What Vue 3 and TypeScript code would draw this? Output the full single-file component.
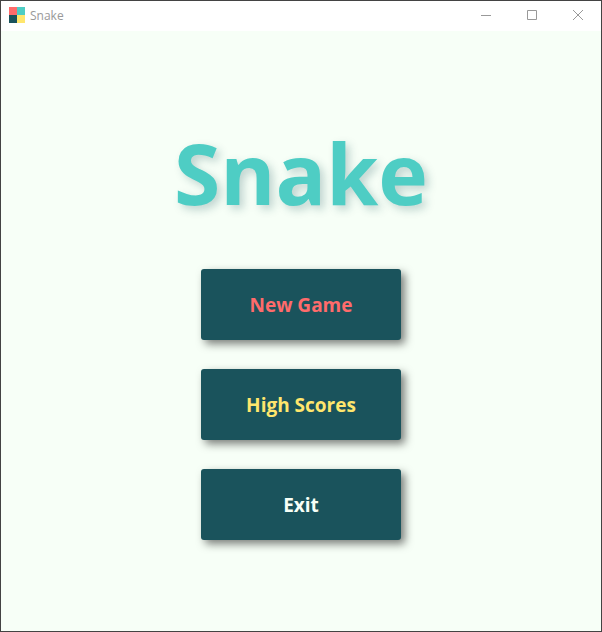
<script setup lang="ts">
interface MenuItem {
  label: string
  tone: string
}

const items: MenuItem[] = [
  { label: 'New Game', tone: 'coral' },
  { label: 'High Scores', tone: 'yellow' },
  { label: 'Exit', tone: 'light' },
]
</script>

<template>
  <div class="window">
    <header class="titlebar">
      <svg class="logo" viewBox="0 0 16 16" aria-hidden="true" shape-rendering="crispEdges">
        <rect width="8" height="8" fill="#ff6b6b" />
        <rect x="8" width="8" height="8" fill="#4ecdc4" />
        <rect y="8" width="8" height="8" fill="#1a535c" />
        <rect x="8" y="8" width="8" height="8" fill="#ffe66d" />
      </svg>
      <span class="caption">Snake</span>
      <div class="controls">
        <button type="button" aria-label="Minimize">
          <svg viewBox="0 0 10 10"><path d="M0 5.5H10" /></svg>
        </button>
        <button type="button" aria-label="Maximize">
          <svg viewBox="0 0 10 10"><path d="M.5 .5H9.5V9.5H.5Z" /></svg>
        </button>
        <button type="button" aria-label="Close">
          <svg viewBox="0 0 10 10"><path d="M0 0L10 10M10 0L0 10" /></svg>
        </button>
      </div>
    </header>
    <main class="menu">
      <h1>Snake</h1>
      <nav class="items">
        <button v-for="item in items" :key="item.label" type="button" :class="['item', item.tone]">
          {{ item.label }}
        </button>
      </nav>
    </main>
  </div>
</template>

<style>
body {
  margin: 0;
}
</style>

<style scoped>
.window {
  box-sizing: border-box;
  min-height: 100vh;
  display: flex;
  flex-direction: column;
  border: 1px solid #434343;
  background: #f7fff7;
  font-family: "Segoe UI", "Open Sans", "Noto Sans", sans-serif;
}

.titlebar {
  display: flex;
  align-items: flex-start;
  height: 30px;
  padding-left: 8px;
  background: #fff;
}

.logo {
  width: 16px;
  height: 16px;
  margin-top: 6px;
}

.caption {
  margin-top: 7px;
  margin-left: 5px;
  font-size: 12px;
  line-height: 16px;
  color: #999;
}

.controls {
  display: flex;
  height: 28px;
  margin-left: auto;
}

.controls button {
  display: flex;
  align-items: center;
  justify-content: center;
  width: 46px;
  padding: 0;
  border: 0;
  background: none;
}

.controls svg {
  width: 10px;
  height: 10px;
  overflow: visible;
  fill: none;
  stroke: #999;
}

.menu {
  flex: 1;
  display: flex;
  flex-direction: column;
  align-items: center;
  padding-top: 82px;
}

h1 {
  margin: 0;
  font-size: 84px;
  line-height: 120px;
  font-weight: 700;
  color: #4ecdc4;
  text-shadow: 4px 4px 8px rgba(26, 83, 92, 0.25);
}

.items {
  display: flex;
  flex-direction: column;
  gap: 29px;
  margin-top: 36px;
}

.item {
  width: 200px;
  height: 71px;
  padding: 0;
  border: 0;
  border-radius: 3px;
  background: #1a535c;
  box-shadow: 4px 4px 8px rgba(0, 0, 0, 0.5);
  font: 700 19px/28px "Segoe UI", "Open Sans", "Noto Sans", sans-serif;
}

.coral {
  color: #ff6b6b;
}

.yellow {
  color: #ffe66d;
}

.light {
  color: #f7fff7;
}
</style>
